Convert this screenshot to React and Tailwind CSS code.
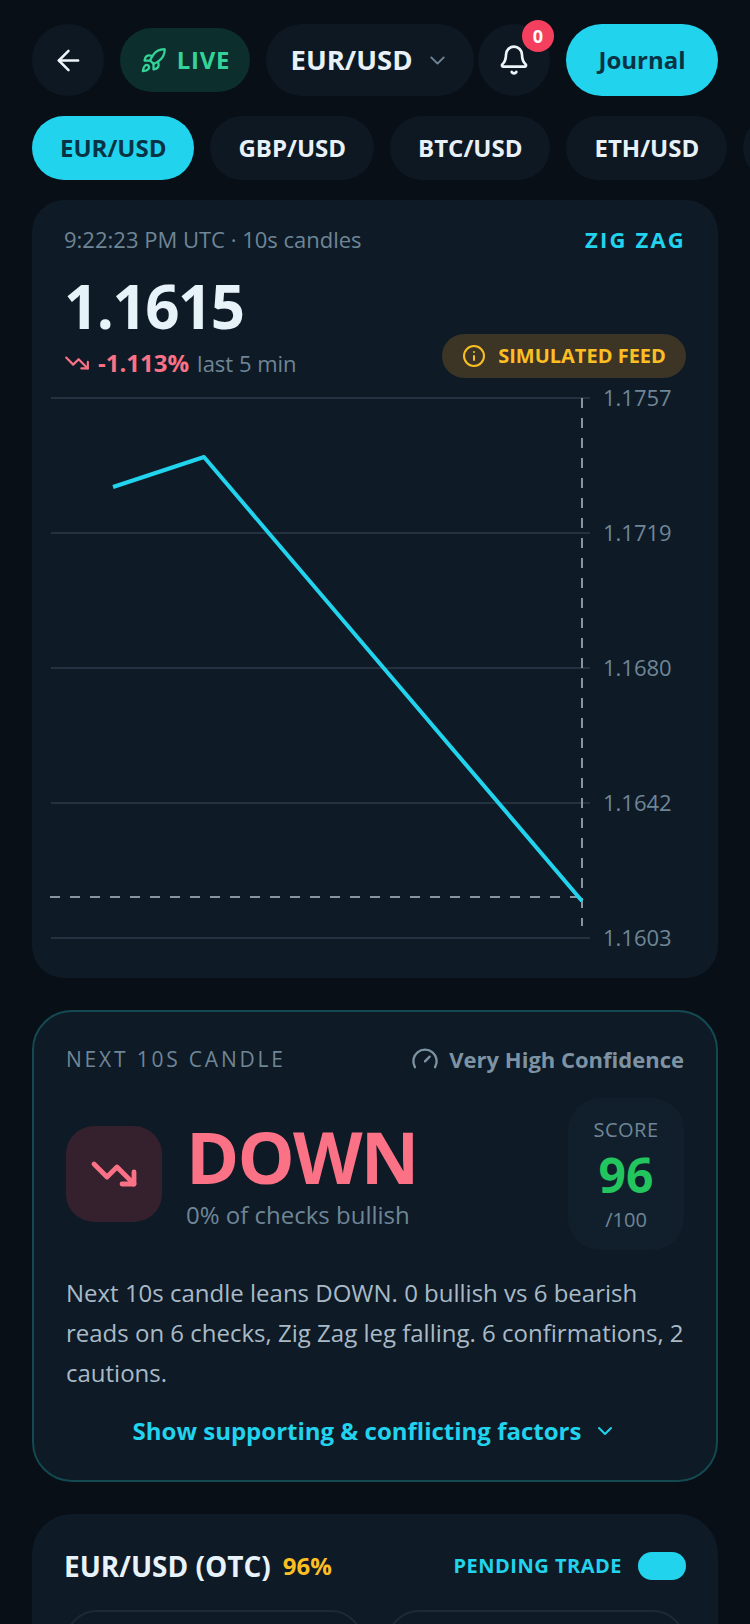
import { ArrowLeft, Bell, ChevronDown, Gauge, Info, Rocket, TrendingDown } from 'lucide-react'

const pairs = ['GBP/USD', 'BTC/USD', 'ETH/USD']
const gridLines = [
  { y: 8, label: '1.1757' },
  { y: 143, label: '1.1719' },
  { y: 278, label: '1.1680' },
  { y: 413, label: '1.1642' },
  { y: 548, label: '1.1603' },
]

function PriceChart() {
  return (
    <svg width="686" height="570" viewBox="0 0 686 570" className="block -mt-[1px] overflow-visible">
      {gridLines.map((g) => (
        <g key={g.label}>
          <line x1="19" x2="558" y1={g.y} y2={g.y} stroke="#233140" strokeWidth="2" />
          <text x="571" y={g.y + 8} fill="#6f8696" fontSize="22" fontFamily="'Open Sans', sans-serif">{g.label}</text>
        </g>
      ))}
      <line x1="18" x2="550" y1="507" y2="507" stroke="#8b949c" strokeWidth="2" strokeDasharray="10 10" />
      <line x1="550" x2="550" y1="8" y2="536" stroke="#8b949c" strokeWidth="2" strokeDasharray="10 10" />
      <polyline points="81,97 172,67 550,511" fill="none" stroke="#22d3ee" strokeWidth="4" strokeLinejoin="round" />
    </svg>
  )
}

export default function App() {
  return (
    <div className="h-[1624px] w-[750px] overflow-hidden bg-[#080f16] font-['Open_Sans',sans-serif]">
      <div className="flex items-center pl-8 pr-8 pt-6">
        <button className="flex h-[72px] w-[72px] items-center justify-center rounded-full bg-[#0e1823] text-[#eef5fa]">
          <ArrowLeft size={33} strokeWidth={1.8} />
        </button>
        <div className="ml-4 flex h-16 w-[130px] items-center justify-center gap-[10px] rounded-full bg-[#0c2e2c] text-[#34d399]">
          <Rocket size={27} strokeWidth={2} />
          <span className="text-[24px] font-bold tracking-[0.7px]">LIVE</span>
        </div>
        <button className="ml-4 flex h-[72px] w-[208px] items-center justify-center gap-[12px] rounded-full bg-[#0e1823]">
          <span className="text-[27.5px] font-bold text-[#e8f1f8]">EUR/USD</span>
          <ChevronDown size={25} strokeWidth={1.8} className="text-[#6f8696]" />
        </button>
        <button className="relative ml-1 flex h-[72px] w-[72px] items-center justify-center rounded-full bg-[#0e1823] text-[#eef5fa]">
          <Bell size={32} strokeWidth={2} />
          <span className="absolute -right-1 -top-1 flex h-8 w-8 items-center justify-center rounded-full bg-[#f43f5e] text-[18px] font-bold text-white">0</span>
        </button>
        <button className="ml-4 flex h-[72px] w-[152px] items-center justify-center rounded-full bg-[#22d3ee] text-[24px] font-bold text-[#083344]">
          Journal
        </button>
      </div>

      <div className="mt-5 flex gap-4 pl-8">
        <button className="flex h-16 shrink-0 items-center justify-center rounded-full bg-[#22d3ee] px-7 text-[24px] font-bold text-[#083344]">EUR/USD</button>
        {pairs.map((p) => (
          <button key={p} className="flex h-16 shrink-0 items-center justify-center rounded-full bg-[#0e1823] px-7 text-[24px] font-bold text-[#e8f1f8]">{p}</button>
        ))}
        <div className="h-16 w-[162px] shrink-0 rounded-full bg-[#0e1823]" />
      </div>

      <section className="mx-8 mt-5 h-[778px] rounded-[32px] bg-[#0e1a26]">
        <div className="flex items-start justify-between px-8 pt-6">
          <span className="text-[22px] leading-[30px] text-[#6f8696]">9:22:23 PM UTC · 10s candles</span>
          <span className="text-[22px] font-bold leading-[30px] tracking-[2.2px] text-[#22d3ee]">ZIG ZAG</span>
        </div>
        <div className="flex h-[137px] items-end justify-between pl-8 pr-8 pb-[13px]">
          <div>
            <div className="text-[60px] font-bold leading-[70px] tracking-tight text-[#e8f2f9]">1.1615</div>
            <div className="mt-[7px] flex items-center gap-2 text-[22px] leading-[30px]">
              <TrendingDown size={26} strokeWidth={2} className="text-[#fb7185]" />
              <span className="text-[24px] font-bold text-[#fb7185]">-1.113%</span>
              <span className="text-[#6f8696]">last 5 min</span>
            </div>
          </div>
          <div className="flex h-11 w-[244px] items-center justify-center gap-[12px] rounded-full bg-[#3c3526] text-[#fbbf24]">
            <Info size={24} strokeWidth={2} />
            <span className="text-[20px] font-bold">SIMULATED FEED</span>
          </div>
        </div>
        <PriceChart />
      </section>

      <section className="mx-8 mt-8 h-[472px] rounded-[40px] border-2 border-[#134a52] bg-[#0e1a26] px-8 pt-[32px]">
        <div className="flex items-center justify-between">
          <span className="text-[21px] leading-[30px] tracking-[2.8px] text-[#6f8696]">NEXT 10S CANDLE</span>
          <span className="flex items-center gap-[10px] text-[22px] font-bold leading-[30px] text-[#7d93a3]">
            <Gauge size={28} strokeWidth={2} />
            Very High Confidence
          </span>
        </div>
        <div className="mt-[24px] flex items-start justify-between">
          <div className="flex items-center gap-6 pt-[19px]">
            <div className="flex h-24 w-24 items-center justify-center rounded-[28px] bg-[#35202e] text-[#fb7185]">
              <TrendingDown size={48} strokeWidth={2.4} />
            </div>
            <div>
              <div className="text-[72px] font-bold leading-[78px] tracking-tight text-[#fb7185]">DOWN</div>
              <div className="mt-[4px] text-[24px] leading-[32px] text-[#6f8696]">0% of checks bullish</div>
            </div>
          </div>
          <div className="flex h-[152px] w-[116px] flex-col items-center rounded-[32px] bg-[#111f2c] pt-[18px]">
            <span className="text-[20px] leading-[28px] tracking-[0.5px] text-[#6f8696]">SCORE</span>
            <span className="text-[48px] font-bold leading-[62px] text-[#22c55e]">96</span>
            <span className="text-[20px] leading-[28px] text-[#6f8696]">/100</span>
          </div>
        </div>
        <p className="mt-[23px] text-[24px] leading-[40px] text-[#a9bac6]">
          Next 10s candle leans DOWN. 0 bullish vs 6 bearish reads on 6 checks, Zig Zag leg falling. 6 confirmations, 2 cautions.
        </p>
        <div className="mt-[20px] flex items-center justify-center gap-[12px] text-[24px] font-bold text-[#22d3ee]">
          Show supporting & conflicting factors
          <ChevronDown size={24} strokeWidth={2} />
        </div>
      </section>

      <section className="mx-8 mt-8 h-[300px] rounded-[40px] bg-[#0e1a26] px-8 pt-[31px]">
        <div className="flex items-center justify-between">
          <div className="flex items-center gap-3">
            <span className="text-[28px] font-bold text-[#e8f2f9]">EUR/USD (OTC)</span>
            <span className="text-[24px] font-bold text-[#fbbf24]">96%</span>
          </div>
          <div className="flex items-center gap-4">
            <span className="text-[20px] font-bold tracking-[0.5px] text-[#22d3ee]">PENDING TRADE</span>
            <div className="h-7 w-12 rounded-full bg-[#22d3ee]" />
          </div>
        </div>
        <div className="mt-[23px] flex gap-6 px-[1px]">
          <div className="h-40 flex-1 rounded-[32px] border-2 border-[#1c2a37]" />
          <div className="h-40 flex-1 rounded-[32px] border-2 border-[#1c2a37]" />
        </div>
      </section>
    </div>
  )
}
